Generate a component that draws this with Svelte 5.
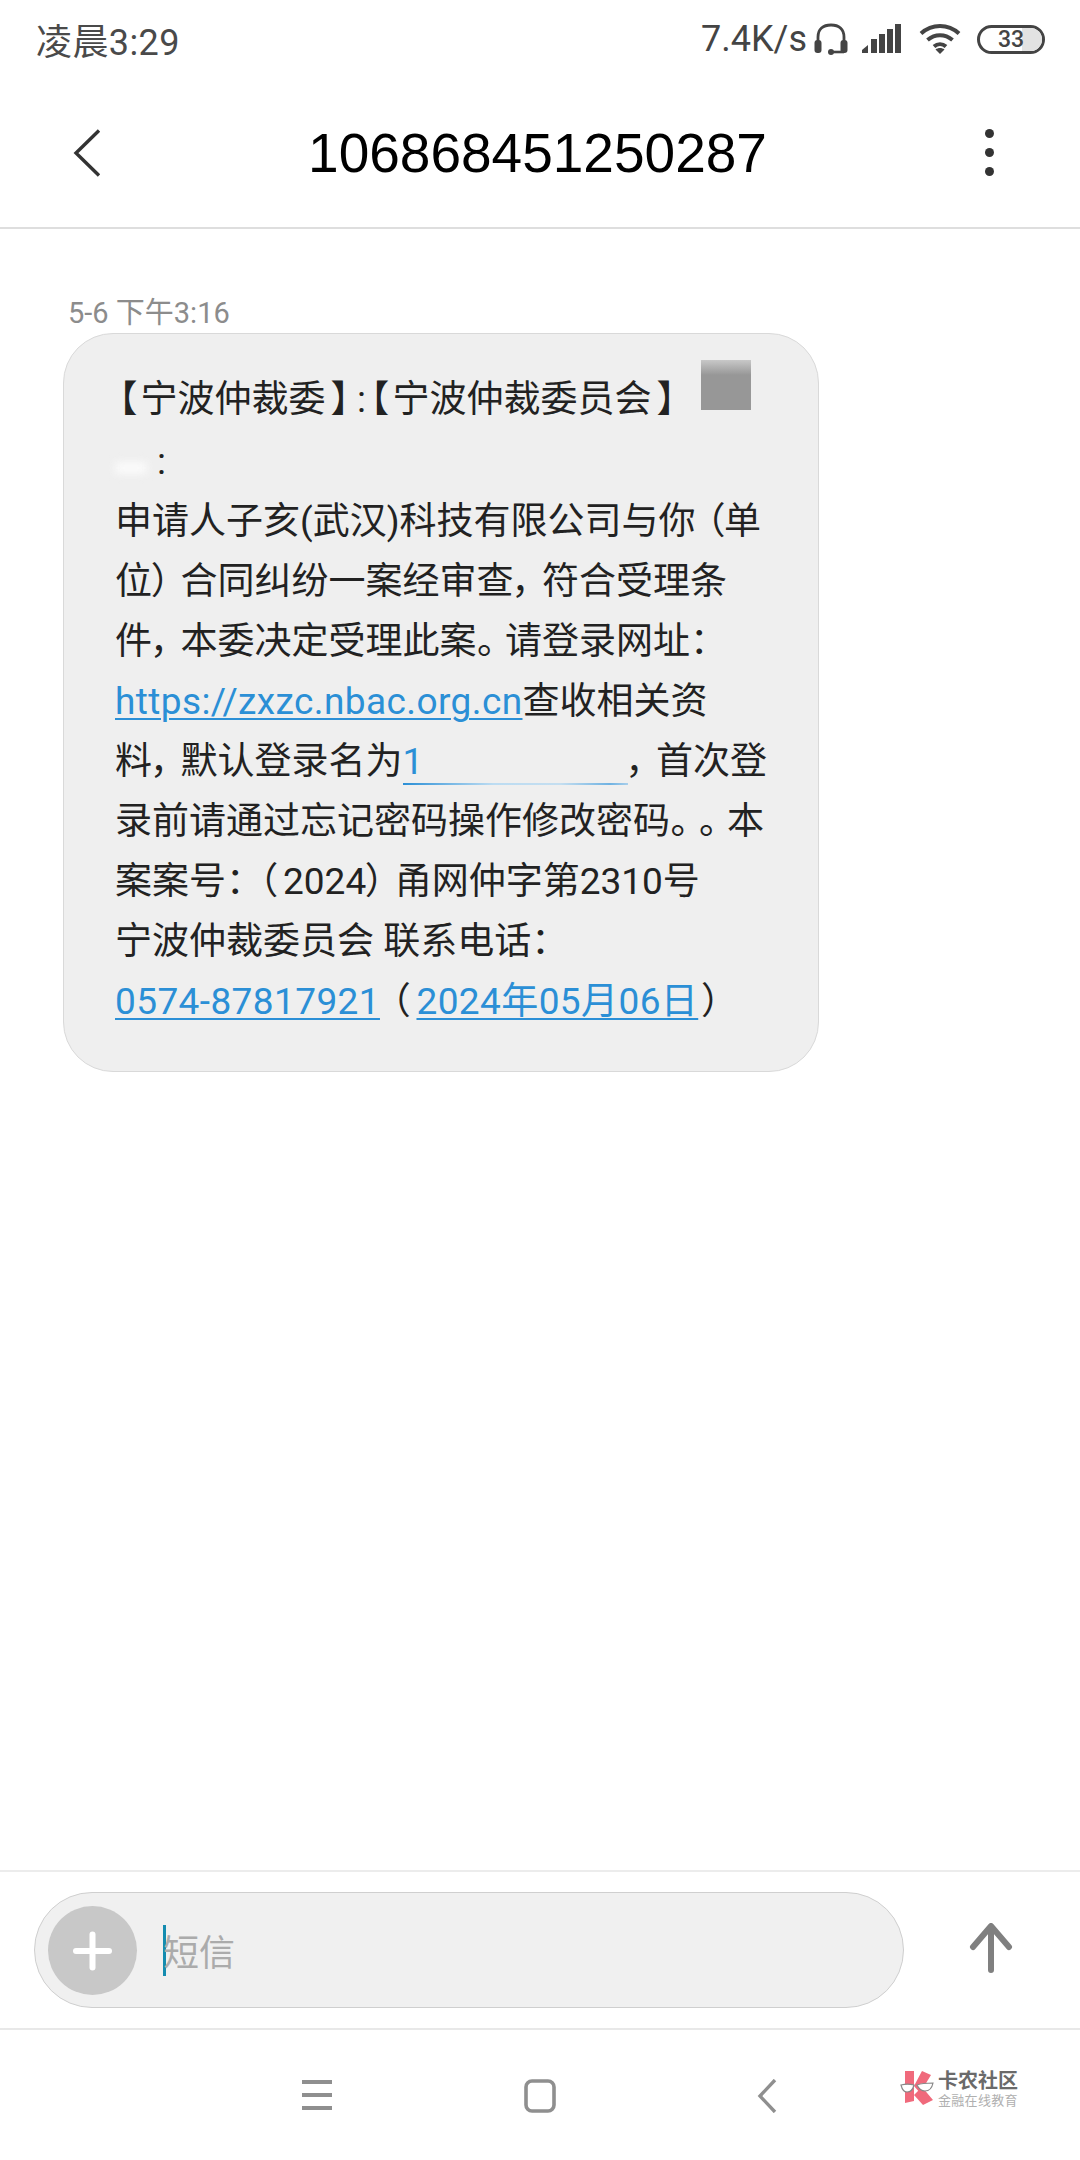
<script>
  const number = "106868451250287";
</script>

<div class="page">
  <div class="status">
    <span class="time">凌晨3:29</span>
    <div class="status-right">
      <span class="speed">7.4K/s</span>
      <svg class="headset" viewBox="0 0 34 32" width="34" height="32">
        <path d="M4 21V14C4 6 9 2 17 2s13 4 13 12v7" fill="none" stroke="#444" stroke-width="2.800" />
        <rect x="0.5" y="17" width="7" height="13" rx="3" fill="#444" />
        <rect x="26.5" y="17" width="7" height="13" rx="3" fill="#444" />
        <path d="M15 29h15" fill="none" stroke="#444" stroke-width="2.600" />
        <circle cx="17" cy="29" r="3" fill="#444" />
      </svg>
      <svg class="signal" viewBox="0 0 40 30" width="40" height="30">
        <path d="M0 29v-3l6-5v8z" fill="#444" />
        <rect x="9" y="15" width="6" height="14" fill="#444" />
        <rect x="17" y="10" width="6" height="19" fill="#444" />
        <rect x="25" y="5" width="6" height="24" fill="#444" />
        <rect x="33" y="0" width="6" height="29" fill="#444" />
      </svg>
      <svg class="wifi" viewBox="0 0 42 30" width="42" height="30">
        <path d="M2 9.500C13-.5 29-.5 40 9.500" fill="none" stroke="#444" stroke-width="4" />
        <path d="M8.500 16C16 9.500 26 9.500 33.500 16" fill="none" stroke="#444" stroke-width="4" />
        <path d="M15 22.500c3.500-3 8.500-3 12 0" fill="none" stroke="#444" stroke-width="4" />
        <path d="M21 30l-4.500-4.500c2.500-2 6.500-2 9 0z" fill="#444" />
      </svg>
      <div class="battery">
        <div class="battery-fill"></div>
        <span>33</span>
      </div>
    </div>
  </div>

  <header class="titlebar">
    <svg class="back" viewBox="0 0 28 48" width="28" height="48">
      <path d="M26 1.500L3 24l23 22.500" fill="none" stroke="#333" stroke-width="3.400" />
    </svg>
    <h1>{number}</h1>
    <div class="more"><i></i><i></i><i></i></div>
  </header>

  <main class="thread">
    <div class="stamp">5-6 下午3:16</div>
    <div class="bubble">
      <div class="redacted-block"></div>
      <div class="line"><span class="ob">【</span>宁波仲裁委<span class="cb">】</span><span class="c">:</span><span class="ob">【</span>宁波仲裁委员会<span class="cb">】</span></div>
      <div class="line second"><span class="smudge"></span><span class="colon">:</span></div>
      <div class="line">申请人子亥(武汉)科技有限公司与你<span class="op">（</span>单</div>
      <div class="line">位<span class="sp">）</span>合同纠纷一案经审查<span class="sp">，</span>符合受理条</div>
      <div class="line">件<span class="sp">，</span>本委决定受理此案<span class="sp">。</span>请登录网址<span class="sp">：</span></div>
      <div class="line"><a class="url" href="#top">https://zxzc.nbac.org.cn</a>查收相关资</div>
      <div class="line">料<span class="sp">，</span>默认登录名为<a class="phone" href="#top">1</a><span class="sp">，</span>首次登</div>
      <div class="line">录前请通过忘记密码操作修改密码<span class="sp">。</span><span class="sp">。</span>本</div>
      <div class="line">案案号<span class="sp">：</span><span class="op narrow">（</span>2024<span class="sp">）</span>甬网仲字第2310号</div>
      <div class="line">宁波仲裁委员会 联系电话<span class="sp">：</span></div>
      <div class="line"><a href="#top">0574-87817921</a><span class="op date">（</span><a href="#top">2024年05月06日</a><span class="cp">）</span></div>
    </div>
  </main>

  <div class="composer">
    <div class="input">
      <div class="plus"><i></i><i></i></div>
      <div class="caret"></div>
      <span class="placeholder">短信</span>
    </div>
    <svg class="send" viewBox="0 0 44 50" width="44" height="50">
      <path d="M22 47V4M4 24L22 3l18 21" fill="none" stroke="#808080" stroke-width="6" stroke-linecap="round" stroke-linejoin="round" />
    </svg>
  </div>

  <nav class="navbar">
    <svg class="nav-menu" viewBox="0 0 30 32" width="30" height="32">
      <path d="M0 3h30M0 16h30M0 29h30" stroke="#8f8f8f" stroke-width="4" />
    </svg>
    <svg class="nav-home" viewBox="0 0 32 34" width="32" height="34">
      <rect x="2" y="2" width="28" height="30" rx="6" fill="none" stroke="#8f8f8f" stroke-width="3.600" />
    </svg>
    <svg class="nav-back" viewBox="0 0 20 34" width="20" height="34">
      <path d="M18 1L3 17l15 16" fill="none" stroke="#8f8f8f" stroke-width="3.400" />
    </svg>
    <div class="watermark">
      <svg viewBox="0 0 34 36" width="34" height="36">
        <path d="M5 1h9v30l-9 2z" fill="#f06a7c" />
        <path d="M14 16L22 1l9 4-11 18z" fill="#f06a7c" />
        <path d="M14 25l9 10 10-5-11-13z" fill="#f06a7c" />
        <path d="M1 15c4-1 9-1 13 0-1 4-3 7-7 7-3 0-5-3-6-7z" fill="#fff" stroke="#888" stroke-width="1.200" />
        <path d="M17 15c5-2 11-2 16-2-1 5-3 8-8 8-3 0-6-2-8-6z" fill="#fff" stroke="#888" stroke-width="1.200" />
      </svg>
      <div class="wm-text">
        <b>卡农社区</b>
        <small>金融在线教育</small>
      </div>
    </div>
  </nav>
</div>

<style>
  :global(body) {
    margin: 0;
    background: #fff;
  }

  .page {
    position: relative;
    width: 1080px;
    height: 2160px;
    display: flex;
    flex-direction: column;
    overflow: hidden;
    background: #fff;
    font-family: Roboto, "Noto Sans CJK SC", sans-serif;
  }

  /* status bar */
  .status {
    height: 78px;
    flex: none;
    display: flex;
    align-items: center;
    justify-content: space-between;
    padding: 0 35px 0 36px;
    color: #444;
  }

  .time {
    font-size: 36px;
    letter-spacing: 0.4px;
    color: #4a4a4a;
  }

  .status-right {
    display: flex;
    align-items: center;
  }

  .speed {
    font-size: 36px;
    margin-right: 7px;
  }

  .signal {
    margin-left: 14px;
  }

  .wifi {
    margin-left: 17px;
  }

  .battery {
    position: relative;
    width: 68px;
    height: 29px;
    margin-left: 16px;
    box-sizing: border-box;
    border: 3px solid #444;
    border-radius: 15px;
    display: flex;
    align-items: center;
    justify-content: center;
    font-size: 23px;
    font-weight: 500;
    overflow: hidden;
  }

  .battery-fill {
    position: absolute;
    top: 0;
    bottom: 0;
    right: 0;
    width: 20px;
    background: #e2e2e2;
  }

  .battery span {
    position: relative;
  }

  /* title bar */
  .titlebar {
    height: 151px;
    flex: none;
    box-sizing: border-box;
    display: flex;
    align-items: center;
    justify-content: space-between;
    padding: 0 86px 0 73px;
    border-bottom: 2px solid #dedede;
  }

  .titlebar h1 {
    margin: 0 11px 0 0;
    font-family: "Liberation Sans", sans-serif;
    font-weight: 400;
    font-size: 55px;
    color: #000;
  }

  .more {
    display: flex;
    flex-direction: column;
    gap: 10px;
  }

  .more i {
    width: 9px;
    height: 9px;
    border-radius: 50%;
    background: #333;
  }

  /* thread */
  .thread {
    flex: 1;
    padding: 64px 0 0 63px;
  }

  .stamp {
    margin: 0 0 0 5px;
    font-size: 29px;
    line-height: 40px;
    color: #8c8c8c;
  }

  .bubble {
    position: relative;
    width: 756px;
    height: 739px;
    box-sizing: border-box;
    padding: 36px 0 0 51px;
    background: #efefef;
    border: 1px solid #d9d9d9;
    border-radius: 50px;
  }

  .redacted-block {
    position: absolute;
    left: 637px;
    top: 26px;
    width: 50px;
    height: 50px;
    background: linear-gradient(#c8c8c8, #979797 30%, #979797);
  }

  .line {
    height: 60px;
    line-height: 60px;
    font-size: 37px;
    color: #222;
    white-space: nowrap;
    font-feature-settings: "palt";
  }

  .second {
    margin-top: 2px;
  }

  /* the phone's system font sets punctuation tighter than full width */
  .ob {
    padding: 0 4px 0 3px;
  }

  .cb {
    padding: 0 6px;
  }

  .c {
    padding: 0 1px;
  }

  .sp {
    padding-right: 10px;
  }

  .op {
    padding-left: 10px;
  }

  .op.narrow {
    padding: 0 6px 0 4px;
  }

  .op.date {
    padding: 0 7px 0 11px;
  }

  .cp {
    padding-left: 4px;
  }

  a {
    color: #2b8fd6;
    letter-spacing: 0.4px;
    text-decoration: underline;
    text-decoration-thickness: 2px;
    text-underline-offset: 4px;
  }

  .colon {
    margin: 0 10px;
  }

  .smudge {
    display: inline-block;
    width: 32px;
    height: 12px;
    background: #fbfbfb;
    filter: blur(4px);
  }

  .phone {
    display: inline-block;
    width: 225px;
    line-height: 46px;
    text-decoration: none;
    background: linear-gradient(90deg, #2b8fd6, #bcdcf2 40%, #c4def0 70%, #6fb2e2 92%, #a9cfeb) bottom / 100% 2px no-repeat;
  }

  /* composer */
  .composer {
    height: 160px;
    flex: none;
    box-sizing: border-box;
    display: flex;
    align-items: center;
    padding: 0 67px 0 34px;
    border-top: 2px solid #ececec;
    border-bottom: 2px solid #e8e8e8;
  }

  .input {
    flex: 1;
    height: 116px;
    box-sizing: border-box;
    display: flex;
    align-items: center;
    padding-left: 13px;
    background: #f0f0f0;
    border: 1px solid #cfcfcf;
    border-radius: 58px;
  }

  .plus {
    position: relative;
    width: 89px;
    height: 89px;
    border-radius: 50%;
    background: #c8c8c8;
  }

  .plus i {
    position: absolute;
    left: 25px;
    top: 42px;
    width: 39px;
    height: 6px;
    border-radius: 3px;
    background: #fff;
  }

  .plus i:last-child {
    transform: rotate(90deg);
  }

  .caret {
    width: 3px;
    height: 51px;
    margin-left: 26px;
    background: #148cb0;
  }

  .placeholder {
    margin-left: -3px;
    font-size: 36px;
    color: #ababab;
  }

  .send {
    margin: 0 0 5px 65px;
  }

  /* nav bar */
  .navbar {
    height: 130px;
    flex: none;
    box-sizing: border-box;
    position: relative;
    display: flex;
    align-items: flex-start;
    padding: 49px 0 0 302px;
  }

  .nav-home {
    margin-left: 192px;
  }

  .nav-back {
    margin-left: 201px;
  }

  .watermark {
    position: absolute;
    left: 900px;
    top: 40px;
    display: flex;
    gap: 4px;
  }

  .wm-text {
    display: flex;
    flex-direction: column;
    font-family: "Liberation Sans", "Noto Sans CJK SC", sans-serif;
  }

  .wm-text b {
    font-size: 20px;
    line-height: 23px;
    color: #6a6a6a;
  }

  .wm-text small {
    font-size: 13px;
    line-height: 15px;
    letter-spacing: 0.300px;
    color: #b0b0b0;
  }
</style>
